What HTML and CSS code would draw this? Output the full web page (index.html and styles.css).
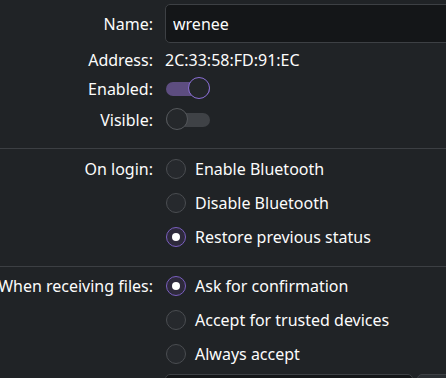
FILE: index.html
```html
<!DOCTYPE html>
<html lang="en">
<head>
  <meta charset="UTF-8">
  <title>Bluetooth Settings</title>
  <link rel="stylesheet" href="styles.css">
</head>
<body>
<div class="page">
  <section class="group first">
    <div class="row name-row">
      <label class="label" for="nameInput">Name:</label>
      <div class="field"><input id="nameInput" class="text-input" type="text" value="wrenee"></div>
    </div>
    <div class="row address-row">
      <span class="label">Address:</span>
      <span class="field">2C:33:58:FD:91:EC</span>
    </div>
    <div class="row enabled-row">
      <span class="label">Enabled:</span>
      <div class="field"><span class="switch on"><span class="knob"></span></span></div>
    </div>
    <div class="row visible-row">
      <span class="label">Visible:</span>
      <div class="field"><span class="switch"><span class="knob"></span></span></div>
    </div>
  </section>

  <section class="group second">
    <div class="row radio-row">
      <span class="label">On login:</span>
      <div class="field"><span class="radio"></span>Enable Bluetooth</div>
    </div>
    <div class="row radio-row">
      <span class="label"></span>
      <div class="field"><span class="radio"></span>Disable Bluetooth</div>
    </div>
    <div class="row radio-row">
      <span class="label"></span>
      <div class="field"><span class="radio checked"></span>Restore previous status</div>
    </div>
  </section>

  <section class="group third">
    <div class="row radio-row">
      <span class="label">When receiving files:</span>
      <div class="field"><span class="radio checked"></span>Ask for confirmation</div>
    </div>
    <div class="row radio-row">
      <span class="label"></span>
      <div class="field"><span class="radio"></span>Accept for trusted devices</div>
    </div>
    <div class="row radio-row">
      <span class="label"></span>
      <div class="field"><span class="radio"></span>Always accept</div>
    </div>
    <div class="row folder-row">
      <span class="label"></span>
      <div class="field"><span class="path-box"></span><span class="path-btn"></span></div>
    </div>
  </section>
</div>
</body>
</html>
```

FILE: styles.css
```css
body {
  margin: 0;
  background: #202326;
  color: #fcfcfc;
  font-family: "Noto Sans", sans-serif;
  font-size: 16px;
  overflow: hidden;
}
.page { width: 446px; height: 378px; overflow: hidden; }
.group { border-bottom: 1px solid #3c3f43; }
.group.first { padding: 4px 0 9px; }
.group.second { padding: 3px 0 12px; }
.group.third { padding: 2px 0 0; border-bottom: none; }

.row {
  display: grid;
  grid-template-columns: 153px 1fr;
  column-gap: 12px;
  align-items: center;
}
.label { text-align: right; white-space: nowrap; justify-self: end; }
.field { display: flex; align-items: center; white-space: nowrap; }

.name-row { height: 39px; }
.address-row { height: 34px; }
.enabled-row { height: 24px; }
.visible-row { height: 38px; }
.radio-row { height: 34px; }
.folder-row { height: 30px; align-items: start; padding-top: 3px; }

.text-input {
  width: 300px;
  height: 39px;
  box-sizing: border-box;
  background: #141618;
  border: 1px solid #3d4044;
  border-radius: 5px;
  color: #fcfcfc;
  font: inherit;
  padding: 0 7px;
  outline: none;
}

.switch {
  position: relative;
  display: inline-block;
  width: 44px;
  height: 14px;
  margin-left: 1px;
  border-radius: 7px;
  background: #3f4246;
}
.switch .knob {
  position: absolute;
  top: -5px;
  left: 0;
  width: 20px;
  height: 20px;
  border-radius: 50%;
  background: #25282b;
  border: 1px solid #55585c;
}
.switch.on { background: #5d4d80; }
.switch.on .knob { left: 22px; border-color: #8b6fd6; background: #232629; }

.radio {
  position: relative;
  width: 18px;
  height: 18px;
  margin: 0 9px 0 1px;
  border-radius: 50%;
  background: #26292d;
  border: 1px solid #4a4d51;
  flex: none;
}
.radio.checked { background: #2e2a3c; border-color: #7a5fc0; }
.radio.checked::after {
  content: "";
  position: absolute;
  left: 5px;
  top: 5px;
  width: 8px;
  height: 8px;
  border-radius: 50%;
  background: #ffffff;
}

.path-box {
  width: 248px;
  height: 30px;
  box-sizing: border-box;
  border: 1px solid #3d4044;
  border-radius: 5px;
  background: #141618;
}
.path-btn {
  width: 40px;
  height: 30px;
  margin-left: 4px;
  box-sizing: border-box;
  border: 1px solid #3d4044;
  border-radius: 5px;
  background: #2a2e32;
}
```
